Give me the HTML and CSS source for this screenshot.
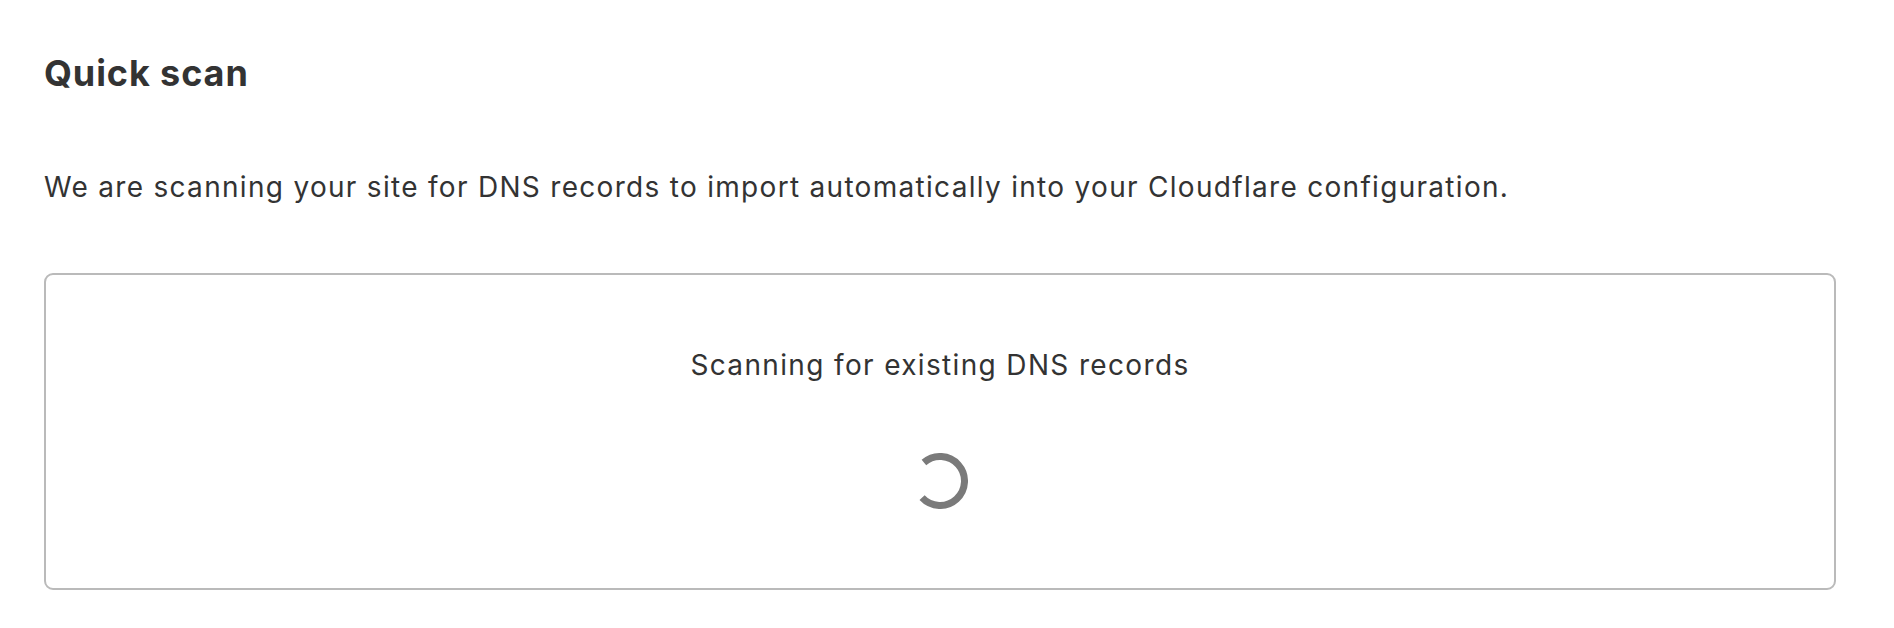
FILE: index.html
```html
<!DOCTYPE html>
<html lang="en">
<head>
<meta charset="utf-8">
<title>Quick scan</title>
<link rel="stylesheet" href="styles.css">
</head>
<body>
<main class="page">
  <h2 class="title">Quick scan</h2>
  <p class="intro">We are scanning your site for DNS records to import automatically into your Cloudflare configuration.</p>
  <section class="scan-card">
    <p class="scan-label">Scanning for existing DNS records</p>
    <svg class="spinner" width="56" height="56" viewBox="0 0 56 56" aria-hidden="true">
      <path d="M11.93 9.51 A24.5 24.5 0 1 1 10.08 44.71" fill="none" stroke="#7a7a7a" stroke-width="7"/>
    </svg>
  </section>
</main>
</body>
</html>
```
FILE: styles.css
```css
html, body {
  margin: 0;
  padding: 0;
  background: #ffffff;
}
body {
  font-family: "Inter", "Liberation Sans", sans-serif;
  color: #333333;
}
.page {
  padding: 51px 58px 0 44px;
}
.title {
  margin: 0;
  font-size: 36px;
  line-height: 44px;
  font-weight: 700;
  letter-spacing: 0.9px;
  color: #333333;
}
.intro {
  margin: 74px 0 0 0;
  font-size: 28px;
  line-height: 36px;
  letter-spacing: 1.3px;
}
.scan-card {
  margin-top: 68px;
  border: 2px solid #bababa;
  border-radius: 9px;
  padding: 72px 0 79px 0;
  display: flex;
  flex-direction: column;
  align-items: center;
  gap: 70px;
}
.scan-label {
  margin: 0;
  font-size: 28px;
  line-height: 36px;
  letter-spacing: 1.35px;
}
.spinner {
  display: block;
}
```
